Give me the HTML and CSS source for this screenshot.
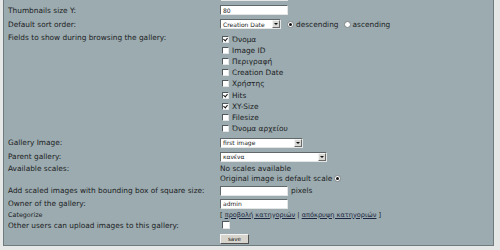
FILE: index.html
```html
<!DOCTYPE html>
<html lang="el">
<head>
    <meta charset="UTF-8">
    <title>Gallery settings</title>
    <link rel="stylesheet" href="styles.css">
</head>
<body>
<div class="panel">
    <div class="row">
        <div class="label"></div>
        <div class="value"><input type="text" class="field" value="80"></div>
    </div>
    <div class="row">
        <div class="label">Thumbnails size Y:</div>
        <div class="value"><input type="text" class="field" value="80"></div>
    </div>
    <div class="row">
        <div class="label">Default sort order:</div>
        <div class="value sort-order">
            <span class="select sort"><span class="select-text">Creation Date</span><span class="select-btn"></span></span>
            <span class="radio on"></span><span class="opt">descending</span>
            <span class="radio"></span><span class="opt">ascending</span>
        </div>
    </div>
    <div class="row top">
        <div class="label">Fields to show during browsing the gallery:</div>
        <div class="value checklist">
            <div class="check"><span class="cb on"></span>Όνομα</div>
            <div class="check"><span class="cb"></span>Image ID</div>
            <div class="check"><span class="cb"></span>Περιγραφή</div>
            <div class="check"><span class="cb"></span>Creation Date</div>
            <div class="check"><span class="cb"></span>Χρήστης</div>
            <div class="check"><span class="cb on"></span>Hits</div>
            <div class="check"><span class="cb on"></span>XY-Size</div>
            <div class="check"><span class="cb"></span>Filesize</div>
            <div class="check"><span class="cb"></span>Όνομα αρχείου</div>
        </div>
    </div>
    <div class="row">
        <div class="label">Gallery Image:</div>
        <div class="value">
            <span class="select image"><span class="select-text">first image</span><span class="select-btn"></span></span>
        </div>
    </div>
    <div class="row">
        <div class="label">Parent gallery:</div>
        <div class="value">
            <span class="select parent"><span class="select-text">κανένα</span><span class="select-btn"></span></span>
        </div>
    </div>
    <div class="row top tight">
        <div class="label">Available scales:</div>
        <div class="value lines">
            <div>No scales available</div>
            <div class="line">Original image is default scale <span class="radio on"></span></div>
        </div>
    </div>
    <div class="row">
        <div class="label">Add scaled images with bounding box of square size:</div>
        <div class="value"><input type="text" class="field" value=""> <span>pixels</span></div>
    </div>
    <div class="row owner">
        <div class="label">Owner of the gallery:</div>
        <div class="value"><input type="text" class="field" value="admin"></div>
    </div>
    <div class="row tight">
        <div class="label small">Categorize</div>
        <div class="links">[ <a href="#">προβολή κατηγοριών</a> | <a href="#">απόκρυψη κατηγοριών</a> ]</div>
    </div>
    <div class="row upload">
        <div class="label">Other users can upload images to this gallery:</div>
        <div class="value"><span class="cb big"></span></div>
    </div>
    <div class="row submit">
        <div class="label"></div>
        <div class="value"><button class="save">save</button></div>
    </div>
</div>
</body>
</html>
```

FILE: styles.css
```css
body {
    margin: 0;
    padding: 0 3px 0 3px;
    background: #e6e8e8;
    font-family: 'DejaVu Sans', Verdana, sans-serif;
    font-size: 7.4px;
    line-height: 9px;
    color: #1b2124;
    overflow: hidden;
}

.panel {
    width: 489px;
    margin-top: -11px;
    background: #9babaf;
    border-left: 1px solid #6e7c80;
    border-right: 1px solid #6e7c80;
    border-bottom: 1px solid #6e7c80;
}

.row {
    display: grid;
    grid-template-columns: 216px 1fr;
    align-items: center;
    padding: 2px 0;
}

.row.top {
    align-items: start;
}

.row.tight {
    padding: 0;
}

.row.owner {
    padding: 1px 0 2px;
}

.row.upload {
    padding: 1px 0 2px;
}

.row.submit {
    padding: 2px 0 1px;
}

.label {
    padding-left: 4px;
}

.label.small {
    font-size: 6.4px;
}

.value {
    display: flex;
    align-items: center;
    gap: 3px;
}

.field {
    box-sizing: border-box;
    width: 68px;
    height: 10px;
    margin: 0;
    padding: 0 2px;
    font-family: 'DejaVu Sans', Verdana, sans-serif;
    font-size: 6px;
    color: #222;
    background: #fff;
    border: 1px solid;
    border-color: #60686b #e4e6e6 #e4e6e6 #60686b;
    outline: none;
}

.select {
    box-sizing: border-box;
    display: inline-flex;
    align-items: center;
    height: 10px;
    background: #fff;
    border: 1px solid;
    border-color: #60686b #e4e6e6 #e4e6e6 #60686b;
    font-size: 6px;
    color: #222;
}

.select.sort { width: 61px; }
.select.image { width: 83px; }
.select.parent { width: 107px; }

.select-text {
    flex: 1;
    padding-left: 2px;
    white-space: nowrap;
    overflow: hidden;
}

.select-btn {
    box-sizing: border-box;
    width: 8px;
    height: 8px;
    background: #d8d8d4;
    border: 1px solid;
    border-color: #f4f4f4 #6a6a6a #6a6a6a #f4f4f4;
    display: flex;
    align-items: center;
    justify-content: center;
}

.select-btn::after {
    content: '';
    border-left: 2px solid transparent;
    border-right: 2px solid transparent;
    border-top: 2px solid #111;
}

.sort-order {
    gap: 0;
}

.sort-order .radio {
    margin-left: 6px;
}

.sort-order .radio + .opt {
    margin-left: 2px;
}

.sort-order .opt + .radio {
    margin-left: 5px;
}

.radio {
    box-sizing: border-box;
    display: inline-flex;
    align-items: center;
    justify-content: center;
    width: 7px;
    height: 7px;
    margin-left: 2px;
    border-radius: 50%;
    background: #fff;
    border: 1px solid #7c8386;
}

.radio.on::after {
    content: '';
    width: 3px;
    height: 3px;
    border-radius: 50%;
    background: #111;
}

.checklist {
    flex-direction: column;
    align-items: flex-start;
    gap: 0;
    padding-top: 1px;
}

.check {
    display: flex;
    align-items: center;
    gap: 3px;
    height: 11.1px;
    padding-left: 2px;
}

.cb {
    box-sizing: border-box;
    position: relative;
    display: inline-block;
    width: 7px;
    height: 7px;
    background: #fff;
    border: 1px solid;
    border-color: #50585b #e4e6e6 #e4e6e6 #50585b;
}

.cb.big {
    width: 8px;
    height: 8px;
    margin-left: 2px;
}

.cb.on::after {
    content: '';
    position: absolute;
    left: 1px;
    top: 0;
    width: 2px;
    height: 3px;
    border-right: 1px solid #111;
    border-bottom: 1px solid #111;
    transform: rotate(40deg);
}

.lines {
    flex-direction: column;
    align-items: flex-start;
    gap: 0;
    line-height: 10px;
}

.line {
    display: flex;
    align-items: center;
}

.links {
    font-size: 6.6px;
    line-height: 9px;
    white-space: nowrap;
}

.links a {
    color: #1d2742;
    text-decoration: underline;
}

.save {
    box-sizing: border-box;
    width: 29px;
    height: 10px;
    margin: 0;
    padding: 0;
    font-family: 'DejaVu Sans', Verdana, sans-serif;
    font-size: 5.6px;
    color: #222;
    background: #d6d4cc;
    border: 1px solid;
    border-color: #f4f4f4 #505050 #505050 #f4f4f4;
}
```
